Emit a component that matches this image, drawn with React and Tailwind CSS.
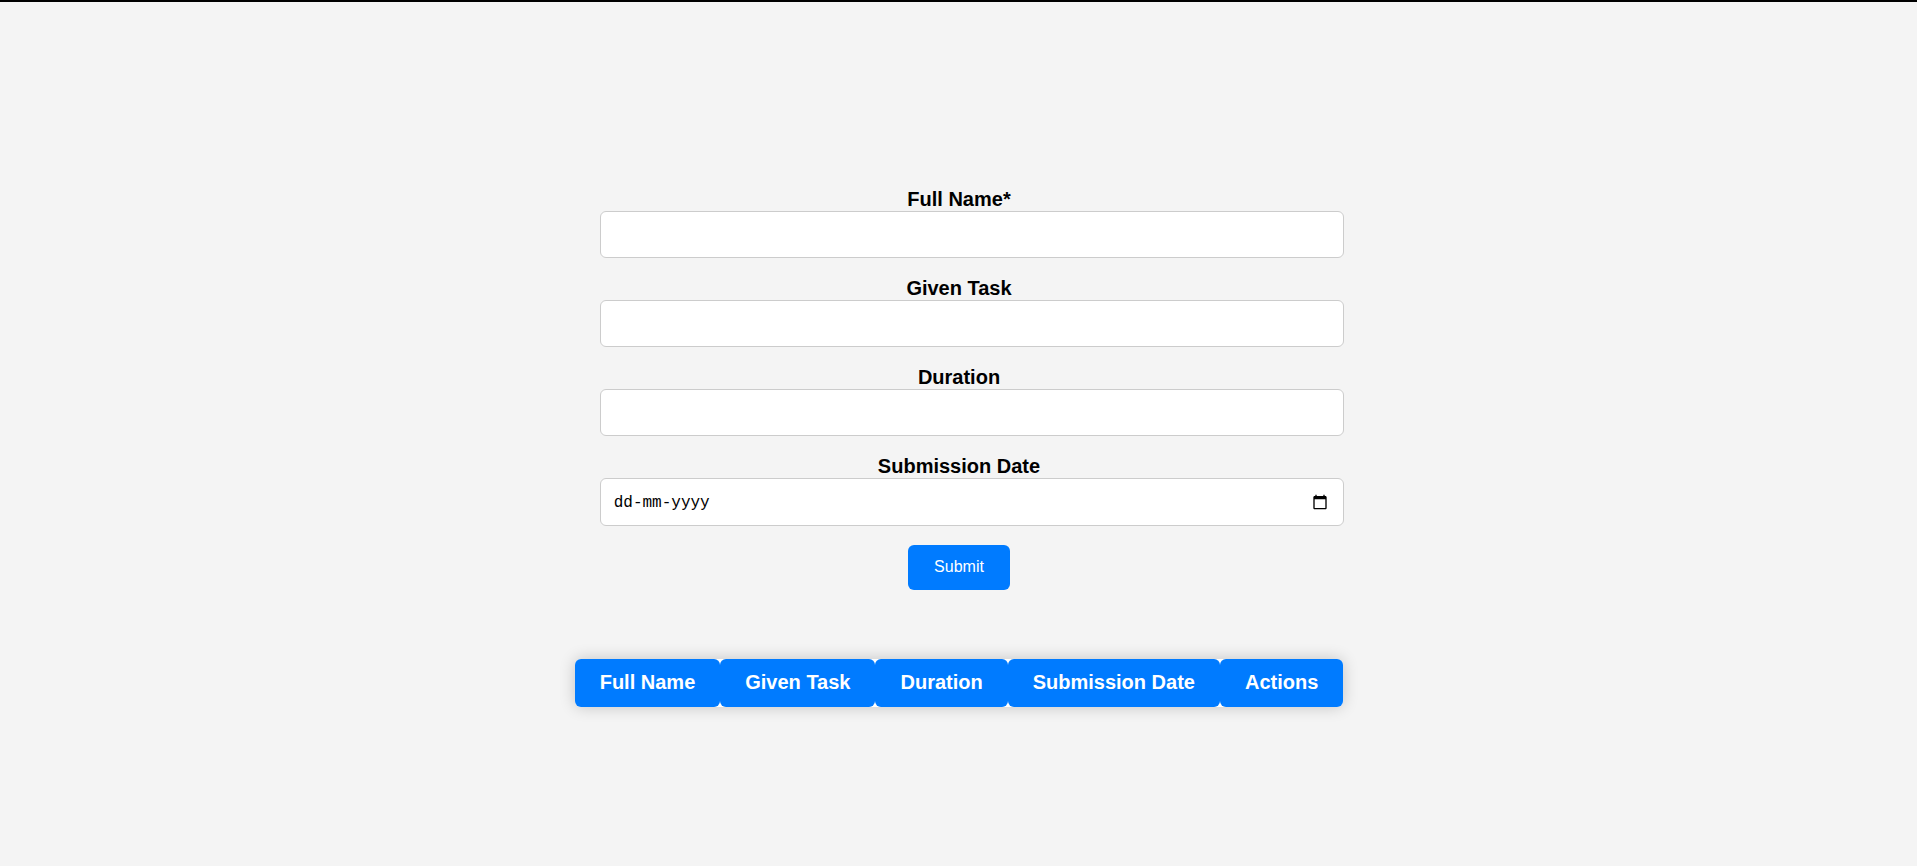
const fields = [
  { id: "fullName", label: "Full Name*" },
  { id: "givenTask", label: "Given Task" },
  { id: "duration", label: "Duration" },
];

const columns = ["Full Name", "Given Task", "Duration", "Submission Date", "Actions"];

function CalendarIcon() {
  return (
    <svg viewBox="0 0 24 24" className="block size-4 fill-black" aria-hidden="true">
      <path d="M20 3h-1V1h-2v2H7V1H5v2H4c-1.1 0-2 .9-2 2v16c0 1.1.9 2 2 2h16c1.1 0 2-.9 2-2V5c0-1.1-.9-2-2-2zm0 18H4V8h16v13z" />
    </svg>
  );
}

function TaskForm() {
  return (
    <form className="flex w-full flex-col px-[25px]" onSubmit={(e) => e.preventDefault()}>
      {fields.map(({ id, label }) => (
        <div key={id} className="mb-[19px] flex flex-col">
          <label htmlFor={id} className="text-center text-xl leading-[23px] font-bold">
            {label}
          </label>
          <input
            id={id}
            type="text"
            className="box-content h-[21px] w-full rounded-md border border-[#ccc] bg-white p-3 text-base outline-none"
          />
        </div>
      ))}
      <div className="mb-[19px] flex flex-col">
        <label htmlFor="submissionDate" className="text-center text-xl leading-[23px] font-bold">
          Submission Date
        </label>
        <div className="box-content flex h-[22px] w-full items-center rounded-md border border-[#ccc] bg-white p-3">
          <input
            id="submissionDate"
            type="text"
            placeholder="dd-mm-yyyy"
            className="min-w-0 flex-1 pt-0.5 pl-px font-['Liberation_Mono',monospace] text-base leading-[20px] outline-none placeholder:text-black"
          />
          <button type="button" aria-label="Choose date" className="mr-[3px]">
            <CalendarIcon />
          </button>
        </div>
      </div>
      <button
        type="submit"
        className="self-center rounded-md bg-[#007bff] px-[26px] pt-[13px] pb-3.5 text-base leading-[18px] text-white"
      >
        Submit
      </button>
    </form>
  );
}

function TaskTable() {
  return (
    <table className="mt-[69px] border-separate border-spacing-0 rounded-md bg-white shadow-[0_0_16px_rgba(0,0,0,0.2)]">
      <thead>
        <tr>
          {columns.map((name) => (
            <th
              key={name}
              scope="col"
              className="rounded-md bg-[#007bff] px-[25px] pt-3 pb-[13px] text-left text-xl leading-[23px] font-bold whitespace-nowrap text-white"
            >
              {name}
            </th>
          ))}
        </tr>
      </thead>
    </table>
  );
}

export default function App() {
  return (
    <main className="flex min-h-screen flex-col items-center justify-center border-t-2 border-black bg-[#f4f4f4] pt-[27px] pl-px font-['Liberation_Sans',Arial,sans-serif] text-black">
      <div className="flex w-fit flex-col">
        <TaskForm />
        <TaskTable />
      </div>
    </main>
  );
}
